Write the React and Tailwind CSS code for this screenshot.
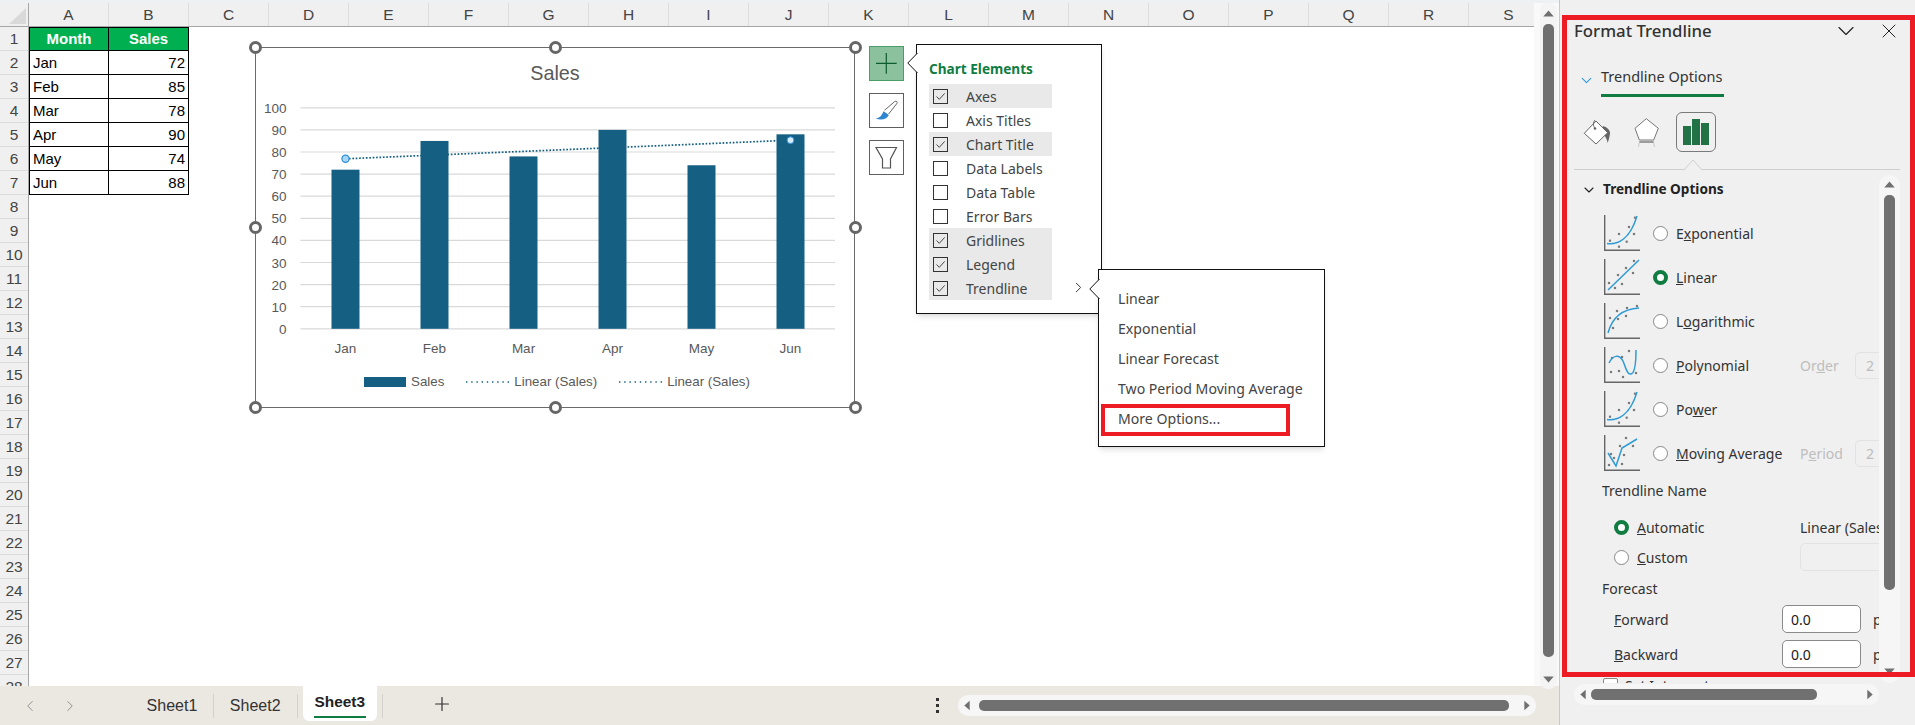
import React from "react";
import { ChevronDown, ChevronLeft, ChevronRight, Plus, X } from "lucide-react";

const columns = "ABCDEFGHIJKLMNOPQRS".split("");
const rows = Array.from({ length: 28 }, (_, i) => i + 1);
const data = [["Jan", 72], ["Feb", 85], ["Mar", 78], ["Apr", 90], ["May", 74], ["Jun", 88]];

function Tri({ dir, className }) {
  const pts = { up: "0,10 7,2 14,10", down: "0,2 14,2 7,10", left: "10,0 10,14 2,7", right: "2,0 2,14 10,7" }[dir];
  const box = dir === "up" || dir === "down" ? "0 0 14 12" : "0 0 12 14";
  return (
    <svg viewBox={box} className={className}>
      <polygon points={pts} fill="#707070" />
    </svg>
  );
}

function Notch({ className }) {
  return (
    <svg viewBox="0 0 11 20" className={"absolute w-[11px] h-[20px] " + className}>
      <polygon points="10.5,0 0.8,10 10.5,20 11,20 11,0" fill="#fff" />
      <polyline points="10.5,0 0.8,10 10.5,20" fill="none" stroke="#111" strokeWidth="1" />
    </svg>
  );
}

function Handle({ className }) {
  return <div className={"absolute w-[13px] h-[13px] rounded-full bg-white border-[3px] border-[#666] " + className} />;
}

function Plot() {
  const y = (v) => 329.3 - v * 2.21;
  const xs = [332, 421, 510, 599, 688, 777];
  return (
    <svg viewBox="256.5 97.5 597 262" className="w-[597px] h-[262px] block">
      {[0, 10, 20, 30, 40, 50, 60, 70, 80, 90, 100].map((v) => (
        <g key={v}>
          <line x1="301" x2="835.5" y1={y(v)} y2={y(v)} stroke="#d9d9d9" strokeWidth="1.2" />
          <text x="287" y={y(v) + 5} textAnchor="end" fontSize="13.5" fill="#595959">{v}</text>
        </g>
      ))}
      <line x1="346" y1="159.3" x2="791" y2="140.7" stroke="#156082" strokeWidth="1.7" strokeDasharray="1.7 1.7" />
      {data.map(([m, v], i) => (
        <g key={m}>
          <rect x={xs[i]} y={y(v)} width="28" height={v * 2.21} fill="#156082" />
          <text x={xs[i] + 14} y="353" textAnchor="middle" fontSize="13.5" fill="#595959">{m}</text>
        </g>
      ))}
      <circle cx="346" cy="159.3" r="3.6" fill="#a9d6f5" stroke="#2b8fe0" strokeWidth="1.2" />
      <circle cx="791" cy="140.7" r="3.4" fill="#d7ecfb" stroke="#2b8fe0" strokeWidth="1" />
    </svg>
  );
}

function LegendItem({ line, label }) {
  return (
    <div className="flex items-center gap-[5px]">
      {line ? (
        <svg viewBox="0 0 43 4" className="w-[43px] h-[4px]">
          <line x1="0" x2="43" y1="2" y2="2" stroke="#156082" strokeWidth="1.4" strokeDasharray="1.4 3.8" />
        </svg>
      ) : (
        <div className="w-[42px] h-[10px] bg-[#156082]" />
      )}
      <span className="text-[13.3px] text-[#595959]">{label}</span>
    </div>
  );
}

function Chart() {
  return (
    <div className="absolute left-[226px] top-[20px] w-[600px] h-[360.5px] border-[1.5px] border-[#6b6b6b] bg-white flex flex-col font-['Liberation_Sans',sans-serif]">
      <div className="h-[49px] pt-[2px] shrink-0 flex items-center justify-center text-[19.8px] text-[#595959]">Sales</div>
      <Plot />
      <div className="h-[45px] pt-[1px] flex items-center justify-center gap-[22px] pl-[4px]">
        <LegendItem label="Sales" />
        <LegendItem line label="Linear (Sales)" />
        <LegendItem line label="Linear (Sales)" />
      </div>
      <Handle className="-left-[7.5px] -top-[7.5px]" />
      <Handle className="left-[293px] -top-[7.5px]" />
      <Handle className="-right-[7.5px] -top-[7.5px]" />
      <Handle className="-left-[7.5px] top-[173px]" />
      <Handle className="-right-[7.5px] top-[173px]" />
      <Handle className="-left-[7.5px] -bottom-[7.5px]" />
      <Handle className="left-[293px] -bottom-[7.5px]" />
      <Handle className="-right-[7.5px] -bottom-[7.5px]" />
    </div>
  );
}

function ChartButtons() {
  return (
    <div className="absolute left-[840px] top-[19px] flex flex-col gap-[12px]">
      <div className="w-[35px] h-[35px] bg-[#8bc19c] border border-[#4a9d66]">
        <svg viewBox="0 0 33 33" className="w-full h-full">
          <path d="M6 16.3H26.7M16.3 6V26.7" stroke="#0e5c2f" strokeWidth="1.2" fill="none" />
        </svg>
      </div>
      <div className="w-[35px] h-[35px] bg-white border border-[#5f5f5f]">
        <svg viewBox="0 0 33 33" className="w-full h-full">
          <path d="M5.5 24.5C10 24.5 12 20.5 13.6 17.2L18.8 21C16.8 25.6 11 26.6 5.5 24.5Z" fill="#2e86d1" />
          <path d="M14.6 16.2L24.6 7.6C26.4 6.4 27.8 7.8 26.8 9.6L18.6 20" fill="#fff" stroke="#666" strokeWidth="1" />
        </svg>
      </div>
      <div className="w-[35px] h-[35px] bg-white border border-[#5f5f5f]">
        <svg viewBox="0 0 33 33" className="w-full h-full">
          <path d="M6 6.5H26.5L20.5 18V27H12.5V18Z" fill="#fff" stroke="#555" strokeWidth="1.2" />
        </svg>
      </div>
    </div>
  );
}

function ElementRow({ label, checked }) {
  return (
    <div className={"h-[24px] w-[123px] flex items-center pl-[4px] " + (checked ? "bg-[#e9e9e9]" : "")}>
      <div className="w-[15px] h-[15px] border border-[#333] bg-transparent shrink-0">
        {checked && (
          <svg viewBox="0 0 13 13" className="w-full h-full">
            <path d="M2.5 6.5L5.3 9.3L10.7 3.4" fill="none" stroke="#333" strokeWidth="0.9" />
          </svg>
        )}
      </div>
      <span className="ml-[18px] text-[14px] text-[#444] whitespace-nowrap">{label}</span>
    </div>
  );
}

function ElementsMenu() {
  const items = [
    ["Axes", 1], ["Axis Titles", 0], ["Chart Title", 1], ["Data Labels", 0], ["Data Table", 0],
    ["Error Bars", 0], ["Gridlines", 1], ["Legend", 1], ["Trendline", 1],
  ];
  return (
    <div className="absolute left-[887px] top-[17px] w-[186px] h-[270px] bg-white border border-[#111] shadow-md pl-[12px] pt-[12px] font-['Noto_Sans',sans-serif]">
      <Notch className="-left-[10px] top-[8px]" />
      <div className="h-[24px] mb-[3px] flex items-center text-[13.6px] font-bold text-[#107c41] whitespace-nowrap">Chart Elements</div>
      {items.map(([l, c]) => <ElementRow key={l} label={l} checked={!!c} />)}
      <ChevronRight size={17} strokeWidth={1.4} className="absolute left-[153px] top-[234px] text-[#333]" />
    </div>
  );
}

function TrendMenu() {
  return (
    <div className="absolute left-[1069px] top-[242px] w-[227px] h-[178px] bg-white border border-[#111] shadow-md pt-[14px] pl-[19px] font-['Noto_Sans',sans-serif]">
      <Notch className="-left-[10px] top-[9px]" />
      {["Linear", "Exponential", "Linear Forecast", "Two Period Moving Average", "More Options..."].map((t) => (
        <div key={t} className="h-[30px] -mt-[0px] flex items-center text-[14.1px] text-[#444] whitespace-nowrap leading-[17px] pb-[1px]">{t}</div>
      ))}
      <div className="absolute left-[2px] top-[134px] w-[189px] h-[32px] border-[4.5px] border-[#ed1c24]" />
    </div>
  );
}

function Sheet() {
  return (
    <div className="w-[1534px] flex flex-col overflow-hidden bg-white font-['Liberation_Sans',sans-serif]">
      <div className="h-[24px] flex shrink-0 bg-[#f0f0f0] border-b border-[#a6a6a6]">
        <div className="w-[29px] shrink-0 relative border-r border-[#a6a6a6]">
          <svg viewBox="0 0 17 16" className="absolute left-[9px] top-[5px] w-[17px] h-[16px]">
            <polygon points="17,0 17,16 0,16" fill="#d9d9d9" />
          </svg>
        </div>
        {columns.map((c) => (
          <div key={c} className="w-[80px] shrink-0 flex items-center justify-center text-[15.5px] text-[#444] border-r border-[#dcdcdc]">{c}</div>
        ))}
      </div>
      <div className="flex-1 flex relative overflow-hidden">
        <div className="w-[29px] shrink-0 bg-[#f0f0f0] border-r border-[#a6a6a6]">
          {rows.map((r) => (
            <div key={r} className="h-[24px] flex items-center justify-center text-[15.5px] text-[#444] border-b border-[#dcdcdc]">{r}</div>
          ))}
        </div>
        <div className="relative flex-1">
          <div className="grid grid-cols-[80px_80px] w-[160px] text-[15px] text-black">
            <div className="h-[24px] bg-[#00b050] border border-black flex items-center justify-center font-bold text-white">Month</div>
            <div className="h-[24px] bg-[#00b050] border-y border-r border-black flex items-center justify-center font-bold text-white">Sales</div>
            {data.map(([m, v]) => (
              <React.Fragment key={m}>
                <div className="h-[24px] pt-[1px] border-x border-b border-black flex items-center pl-[3px]">{m}</div>
                <div className="h-[24px] pt-[1px] border-r border-b border-black flex items-center justify-end pr-[3px]">{v}</div>
              </React.Fragment>
            ))}
          </div>
          <Chart />
          <ChartButtons />
          <ElementsMenu />
          <TrendMenu />
        </div>
      </div>
    </div>
  );
}

function SheetScrollbar() {
  return (
    <div className="w-[25px] bg-[#f9f9f9] pl-[6px] flex">
      <div className="w-[17px] rounded-lg bg-[#f4f4f4] flex flex-col items-center relative z-10 h-[686px] pt-[6px] pb-[5px]">
        <Tri dir="up" className="w-[11px] h-[9px] shrink-0" />
        <div className="w-[11px] flex-1 mt-[6px] mb-[18px] rounded-[5px] bg-[#707070]" />
        <Tri dir="down" className="w-[11px] h-[9px] shrink-0" />
      </div>
    </div>
  );
}

function HScroll({ className, thumb, gapL }) {
  return (
    <div className={"h-[21px] rounded-[10px] bg-[#f6f6f6] flex items-center px-[5px] " + className}>
      <Tri dir="left" className="w-[8px] h-[11px] shrink-0" />
      <div className={"h-[11px] rounded-[5px] bg-[#707070] shrink-0 " + thumb + " " + gapL} />
      <div className="flex-1" />
      <Tri dir="right" className="w-[8px] h-[11px] shrink-0" />
    </div>
  );
}

function TabBar() {
  return (
    <div className="h-[39px] shrink-0 bg-[#ebe7e1] flex items-start font-['Liberation_Sans',sans-serif] text-[16px] text-[#333] relative">
      <div className="flex items-center h-[39px] pl-[21px] gap-[22px] text-[#8f8f8f]">
        <ChevronLeft size={18} strokeWidth={1.3} />
        <ChevronRight size={18} strokeWidth={1.3} />
      </div>
      <div className="h-[39px] flex items-center ml-[67.6px]">
        <span>Sheet1</span>
        <div className="w-px h-[24px] bg-[#d4d0cb] ml-[15.5px] mr-[16px]" />
        <span>Sheet2</span>
        <div className="w-px h-[24px] bg-[#d4d0cb] ml-[16px] mr-[5px]" />
      </div>
      <div className="w-[74.5px] h-[35px] bg-white rounded-b-md flex justify-center pt-[7px] text-[#222]">
        <span className="h-[25px] border-b-2 border-[#107c41] px-[1px] leading-[18px] font-bold text-[15.4px]">Sheet3</span>
      </div>
      <div className="h-[39px] flex items-center">
        <div className="w-px h-[24px] bg-[#d4d0cb] ml-[5px]" />
        <Plus size={22} strokeWidth={1.3} className="ml-[48px] -mt-[3px] text-[#333]" />
      </div>
      <div className="ml-[483px] h-[39px] flex items-center">
        <div className="flex flex-col gap-[3px] -mt-[1px]">
          <span className="w-[3px] h-[3px] bg-[#333]" />
          <span className="w-[3px] h-[3px] bg-[#333]" />
          <span className="w-[3px] h-[3px] bg-[#333]" />
        </div>
      </div>
      <HScroll className="absolute left-[958px] top-[9px] w-[577.5px]" thumb="w-[530px]" gapL="ml-[8px]" />
    </div>
  );
}

const Dots = ({ pts }) => pts.map(([x, y], i) => <rect key={i} x={x - 1.1} y={y - 1.1} width="2.2" height="2.2" fill="#7a7a7a" />);

const trendIcons = {
  exp: { d: "M3 28.5C14 30 26 24 33 1", pts: [[6, 25.7], [15, 31.7], [15, 19], [22.7, 26.7], [25, 12], [30, 19], [31, 2.7]] },
  lin: { d: "M4 31L35 1", pts: [[5, 24], [11, 29], [18, 25], [14, 16], [22, 9], [29, 14], [30, 2]] },
  log: { d: "M4 30C8 15 18 6 35 5", pts: [[9, 25], [6, 15], [14, 16], [13, 8], [22, 13], [23, 5], [33, 3]] },
  poly: { d: "M5 16C9 8 15 7 19 14C22 21 23 28 27 27C31 26 32 14 32 3", pts: [[8, 11], [18, 10], [25, 4], [7, 25], [15, 24], [19, 30], [32, 26]] },
  ma: { d: "M4 18L12 31L18 13L33 4", pts: [[7, 19], [10, 23], [5, 30], [18, 29], [20, 20], [16, 11], [22, 3], [29, 11]] },
};

function TrendIcon({ kind }) {
  const t = trendIcons[kind];
  return (
    <svg viewBox="0 0 36 36" className="w-[36px] h-[36px] shrink-0">
      <path d="M0.7 0V35.3H36" fill="none" stroke="#666" strokeWidth="1.4" />
      <Dots pts={t.pts} />
      <path d={t.d} fill="none" stroke="#2e9bd6" strokeWidth="1.5" />
    </svg>
  );
}

function Radio({ on }) {
  return on ? (
    <div className="w-[15px] h-[15px] rounded-full bg-white border-[4px] border-[#107c41] shrink-0" />
  ) : (
    <div className="w-[15px] h-[15px] rounded-full bg-white border border-[#888] shrink-0" />
  );
}

function TrendRow({ kind, label, on, extra }) {
  return (
    <div className="h-[44px] flex items-center relative pl-[44px]">
      <TrendIcon kind={kind} />
      <div className="ml-[13px]"><Radio on={on} /></div>
      <span className="ml-[8px] text-[14px] whitespace-nowrap">{label}</span>
      {extra && (
        <div className="absolute left-[240px] top-0 h-[44px] flex items-center text-[#bdbdbd] text-[14px]">
          <span className="w-[55px]">{extra}</span>
          <div className="w-[40px] h-[27px] border border-[#e2e2e2] rounded-[5px] pl-[10px] flex items-center">2</div>
        </div>
      )}
    </div>
  );
}

function NumberField({ label }) {
  return (
    <div className="h-[28px] flex items-center pl-[54px]">
      <span className="w-[168px] shrink-0">{label}</span>
      <div className="w-[79px] shrink-0 h-[28px] bg-white border border-[#8a8a8a] rounded-[5px] pl-[8px] flex items-center text-[#1a1a1a]">0.0</div>
      <span className="ml-[12px]">p</span>
    </div>
  );
}

function Panel() {
  return (
    <div className="w-[356px] shrink-0 bg-[#f0f0f0] border-l border-[#c8c8c8] flex flex-col relative font-['Noto_Sans',sans-serif] text-[#333]">
      <div className="h-[62px] shrink-0 flex items-center pl-[14px]">
        <span className="w-[142px] text-[16.8px] font-medium text-[#333] whitespace-nowrap">Format Trendline</span>
        <ChevronDown size={28} strokeWidth={1} className="ml-[116px] text-[#222]" />
        <X size={24} strokeWidth={1} className="ml-[17px] text-[#222]" />
      </div>
      <div className="h-[35px] shrink-0 flex pl-[18px]">
        <ChevronDown size={17} strokeWidth={1.6} className="text-[#2e9bd6] mt-[10px]" />
        <div className="ml-[6px] w-[123px] h-[35px] border-b-[3px] border-[#107c41] text-[14.5px] leading-[28px] whitespace-nowrap">Trendline Options</div>
      </div>
      <div className="h-[72px] shrink-0 flex items-start relative">
        <svg viewBox="0 0 28 28" className="absolute left-[23px] top-[21px] w-[28px] h-[28px]">
          <path d="M19.7 8C24 9 27.5 12 27 16C26.6 19 25.6 22 24.7 25C24.2 22 23 19 21 17Z" fill="#666" />
          <polygon points="1.3,15.3 13,3 24.7,14.7 13,26" fill="#fff" stroke="#666" strokeWidth="1" />
          <path d="M12 2C10 4 10 8 12 10.5" fill="none" stroke="#666" strokeWidth="1" />
          <circle cx="12" cy="10.5" r="1.3" fill="#666" />
        </svg>
        <svg viewBox="0 0 30 32" className="absolute left-[71px] top-[19px] w-[30px] h-[32px]">
          <polygon points="15.3,2.7 27.3,12.3 22.7,24 8.3,24 4,12.3" fill="#fff" stroke="#777" strokeWidth="1" />
          <path d="M8.3 26H22.7" stroke="#888" strokeWidth="1.6" />
          <path d="M8.3 27L7.5 31M22.7 27L23.5 31" stroke="#ccc" strokeWidth="1" />
        </svg>
        <div className="absolute left-[116px] top-[15px] w-[40px] h-[40px] border border-[#7a7a7a] rounded-[6px] flex items-end justify-center gap-[1px] pb-[6px]">
          <div className="w-[8px] h-[19px] bg-[#217346]" />
          <div className="w-[8px] h-[26px] bg-[#217346]" />
          <div className="w-[8px] h-[22px] bg-[#217346]" />
        </div>
      </div>
      <div className="mx-[14px] w-[326px] h-px bg-[#cfcfcf] relative shrink-0">
        <svg viewBox="0 0 18 11" className="absolute left-[110px] -top-[10px] w-[18px] h-[11px]">
          <polygon points="0,11 9,1 18,11" fill="#f0f0f0" />
          <polyline points="0,11 9,1 18,11" fill="none" stroke="#cfcfcf" strokeWidth="1" />
        </svg>
      </div>
      <div className="h-[513px] shrink-0 flex overflow-hidden text-[14px]">
        <div className="w-[319px] shrink-0 overflow-hidden">
          <div className="h-[41px] pb-[2px] flex items-center pl-[21px]">
            <ChevronDown size={16} strokeWidth={1.6} className="text-[#222]" />
            <span className="ml-[6px] font-bold text-[13.6px] text-[#222] whitespace-nowrap">Trendline Options</span>
          </div>
          <TrendRow kind="exp" on={false} label={<>E<u>x</u>ponential</>} />
          <TrendRow kind="lin" on label={<><u>L</u>inear</>} />
          <TrendRow kind="log" on={false} label={<>L<u>o</u>garithmic</>} />
          <TrendRow kind="poly" on={false} label={<><u>P</u>olynomial</>} extra={<>Or<u>d</u>er</>} />
          <TrendRow kind="exp" on={false} label={<>Po<u>w</u>er</>} />
          <TrendRow kind="ma" on={false} label={<><u>M</u>oving Average</>} extra={<>P<u>e</u>riod</>} />
          <div className="h-[32px] pb-[2px] flex items-center pl-[42px]">Trendline Name</div>
          <div className="mt-[5px] flex">
            <div className="w-[240px] pl-[54px]">
              <div className="h-[30px] flex items-center gap-[8px]"><Radio on /><span><u>A</u>utomatic</span></div>
              <div className="h-[30px] flex items-center gap-[8px]"><Radio on={false} /><span><u>C</u>ustom</span></div>
            </div>
            <div className="flex-1 overflow-hidden">
              <div className="h-[30px] flex items-center whitespace-nowrap">Linear (Sales)</div>
              <div className="mt-[1px] w-[120px] h-[28px] border border-[#e2e2e2] rounded-[5px]" />
            </div>
          </div>
          <div className="h-[33px] flex items-center pl-[42px]">Forecast</div>
          <NumberField label={<><u>F</u>orward</>} />
          <div className="h-[7px]" />
          <NumberField label={<><u>B</u>ackward</>} />
          <div className="mt-[10px] pl-[43px] flex items-start gap-[7px]">
            <div className="w-[15px] h-[15px] bg-white border border-[#888] rounded-[2px] shrink-0" />
            <span className="leading-[15px]">Set Intercept</span>
          </div>
        </div>
        <div className="w-[21px] h-[508px] mt-[5px] rounded-[10px] bg-[#f6f6f6] flex flex-col items-center pt-[5px] pb-[7px]">
          <Tri dir="up" className="w-[11px] h-[9px] shrink-0" />
          <div className="w-[11px] h-[395px] mt-[6px] rounded-[5px] bg-[#707070]" />
          <div className="flex-1" />
          <Tri dir="down" className="w-[11px] h-[9px] shrink-0" />
        </div>
      </div>
      <HScroll className="ml-[14px] w-[305px] mt-[1px]" thumb="w-[226px]" gapL="ml-[4px]" />
      <div className="absolute left-[2px] top-[15px] right-0 h-[662px] border-[5px] border-[#ed1c24] pointer-events-none" />
    </div>
  );
}

export default function App() {
  return (
    <div className="w-[1915px] h-[725px] flex overflow-hidden bg-white">
      <div className="w-[1559px] shrink-0 flex flex-col">
        <div className="h-[3px] shrink-0 bg-[#eef0f4]" />
        <div className="flex-1 flex min-h-0">
          <Sheet />
          <SheetScrollbar />
        </div>
        <TabBar />
      </div>
      <Panel />
    </div>
  );
}
